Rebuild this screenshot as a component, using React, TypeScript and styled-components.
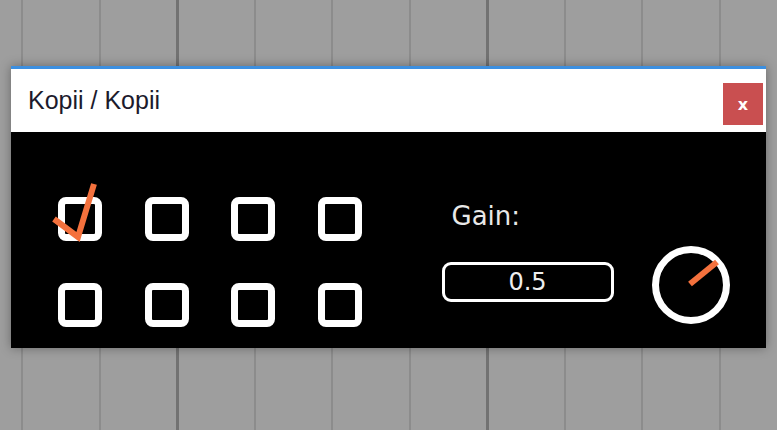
import React from "react";
import styled, { createGlobalStyle } from "styled-components";

const Global = createGlobalStyle`
  html, body { margin: 0; padding: 0; }
  body {
    width: 777px;
    height: 430px;
    overflow: hidden;
    background-color: #9e9e9e;
    background-image:
      repeating-linear-gradient(90deg, transparent 0 176px, #727272 176px 179px, transparent 179px 310px),
      repeating-linear-gradient(90deg, transparent 0 21px, #8c8c8c 21px 23px, transparent 23px 77.5px);
  }
`;

const Page = styled.div`
  padding: 66px 0 0 11px;
`;

const Window = styled.div`
  width: 755px;
  box-shadow: 0 0 10px rgba(0, 0, 0, 0.35);
`;

const TitleBar = styled.div`
  height: 63px;
  background: #ffffff;
  border-top: 3px solid #3c8fe0;
  display: flex;
  align-items: center;
  justify-content: space-between;
  padding: 0 3px 0 17px;
`;

const Title = styled.span`
  font-family: "Liberation Sans", Arial, sans-serif;
  font-size: 25px;
  color: #1c1a2c;
`;

const CloseButton = styled.div`
  width: 40px;
  height: 42px;
  align-self: flex-end;
  margin-bottom: 7px;
  background: #c94f50;
  color: #ffffff;
  font-family: "DejaVu Sans", sans-serif;
  font-weight: bold;
  font-size: 16px;
  display: flex;
  align-items: center;
  justify-content: center;
`;

const Body = styled.div`
  height: 216px;
  box-sizing: border-box;
  background: #000000;
  display: flex;
  align-items: flex-start;
  padding: 65px 0 0 47px;
`;

const Grid = styled.div`
  display: grid;
  grid-template-columns: repeat(4, 44px);
  grid-auto-rows: 44px;
  column-gap: 42.5px;
  row-gap: 42px;
`;

const Box = styled.div`
  position: relative;
  box-sizing: border-box;
  width: 44px;
  height: 44px;
  border: 7px solid #ffffff;
  border-radius: 8px;
`;

const Check = styled.svg`
  position: absolute;
  left: -15px;
  top: -27px;
  overflow: visible;
`;

const Right = styled.div`
  margin-left: 80px;
  margin-top: 4px;
  display: flex;
  flex-direction: column;
`;

const Label = styled.div`
  font-family: "DejaVu Sans", Verdana, sans-serif;
  font-size: 26px;
  line-height: 30px;
  color: #e8e8e8;
  padding-left: 10px;
`;

const ControlRow = styled.div`
  display: flex;
  align-items: flex-start;
  margin-top: 14px;
  gap: 37px;
`;

const ValueBox = styled.div`
  box-sizing: border-box;
  width: 172px;
  height: 40px;
  margin-top: 17px;
  border: 3px solid #ffffff;
  border-radius: 9px;
  display: flex;
  align-items: center;
  justify-content: center;
  font-family: "DejaVu Sans", Verdana, sans-serif;
  font-size: 24px;
  color: #eeeeee;
`;

const Knob = styled.svg`
  display: block;
`;

export default function App() {
  const boxes = Array.from({ length: 8 }, (_, i) => i);
  return (
    <>
      <Global />
      <Page>
        <Window>
          <TitleBar>
            <Title>Kopii / Kopii</Title>
            <CloseButton>x</CloseButton>
          </TitleBar>
          <Body>
            <Grid>
              {boxes.map((i) => (
                <Box key={i}>
                  {i === 0 && (
                    <Check width="44" height="60" viewBox="0 0 44 60">
                      <polyline
                        points="4,42 28,60 44,7"
                        fill="none"
                        stroke="#f4713d"
                        strokeWidth="6"
                        strokeLinejoin="miter"
                      />
                    </Check>
                  )}
                </Box>
              ))}
            </Grid>
            <Right>
              <Label>Gain:</Label>
              <ControlRow>
                <ValueBox>0.5</ValueBox>
                <Knob width="80" height="80" viewBox="0 0 80 80">
                  <circle cx="40" cy="40" r="35.5" fill="none" stroke="#ffffff" strokeWidth="7" />
                  <line x1="39" y1="39" x2="66" y2="17" stroke="#f4713d" strokeWidth="6" />
                </Knob>
              </ControlRow>
            </Right>
          </Body>
        </Window>
      </Page>
    </>
  );
}
